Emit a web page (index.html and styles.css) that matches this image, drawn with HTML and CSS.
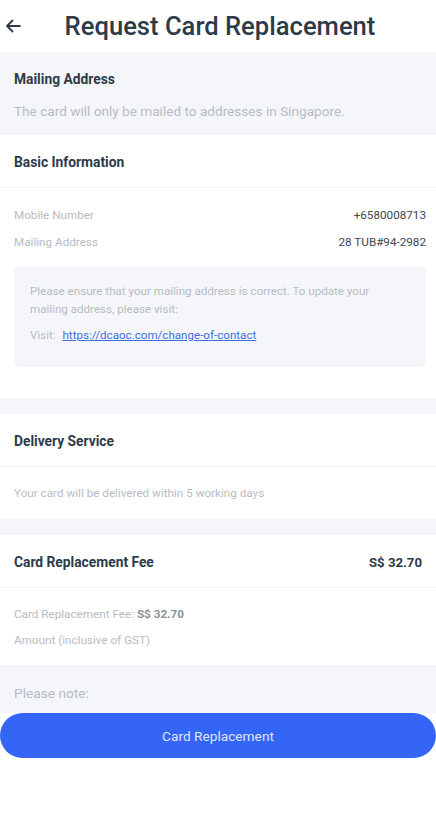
FILE: index.html
```html
<!DOCTYPE html>
<html lang="en">
<head>
  <meta charset="UTF-8">
  <title>Request Card Replacement</title>
  <link rel="stylesheet" href="styles.css">
</head>
<body>
  <header class="topbar">
    <span class="back">
      <svg width="16" height="14" viewBox="0 0 16 14"><path d="M15 7H2M7.5 1.5L2 7l5.5 5.5" fill="none" stroke="#2d3a4a" stroke-width="1.8" stroke-linecap="round" stroke-linejoin="round"/></svg>
    </span>
    <h1>Request Card Replacement</h1>
  </header>

  <main>
    <section class="intro">
      <h2>Mailing Address</h2>
      <p>The card will only be mailed to addresses in Singapore.</p>
    </section>

    <section class="card basic">
      <div class="card-head"><h2>Basic Information</h2></div>
      <div class="row"><span>Mobile Number</span><span class="val">+6580008713</span></div>
      <div class="row"><span>Mailing Address</span><span class="val">28 TUB#94-2982</span></div>
      <div class="note">
        <p>Please ensure that your mailing address is correct. To update your mailing address, please visit:</p>
        <p class="visit">Visit: <a href="#">https://dcaoc.com/change-of-contact</a></p>
      </div>
    </section>

    <section class="card">
      <div class="card-head"><h2>Delivery Service</h2></div>
      <div class="card-body"><p>Your card will be delivered within 5 working days</p></div>
    </section>

    <section class="card last">
      <div class="card-head"><h2>Card Replacement Fee</h2><span class="price">S$ 32.70</span></div>
      <div class="fee-body">
        <p>Card Replacement Fee: <b>S$ 32.70</b></p>
        <p>Amount (inclusive of GST)</p>
      </div>
    </section>

    <section class="please">Please note:</section>
  </main>

  <button class="submit">Card Replacement</button>
</body>
</html>
```
FILE: styles.css
```css
body {
  margin: 0;
  font-family: Roboto, "Noto Sans", Arial, sans-serif;
  background: #fff;
  color: #2d3a4a;
  width: 436px;
}
.topbar {
  height: 52px;
  display: flex;
  align-items: center;
  position: relative;
}
.back {
  position: absolute;
  left: 5px;
  top: 18px;
}
.topbar h1 {
  margin: 0 auto;
  font-size: 25.6px;
  font-weight: 500;
  color: #2d3a4a;
  padding-left: 4px;
}
main {
  background: #f5f6f9;
}
h2 {
  margin: 0;
  font-size: 13.8px;
  font-weight: 700;
  color: #2d3a4a;
}
p {
  margin: 0;
}
.intro {
  height: 83px;
  padding: 19px 14px 0;
  box-sizing: border-box;
}
.intro p {
  margin-top: 16px;
  font-size: 13.6px;
  color: #b7bcc4;
}
.card {
  background: #fff;
  margin-bottom: 16px;
}
.card.last {
  margin-bottom: 0;
}
.card-head {
  height: 53px;
  display: flex;
  align-items: center;
  justify-content: space-between;
  padding: 2px 14px 0;
  box-sizing: border-box;
  border-bottom: 1px solid #f0f1f4;
}
.price {
  font-size: 13.2px;
  font-weight: 700;
}
.basic {
  padding-bottom: 31px;
}
.row {
  height: 27px;
  display: flex;
  align-items: center;
  justify-content: space-between;
  padding: 0 10px 0 14px;
  font-size: 11.7px;
  color: #b7bcc4;
}
.basic .card-head + .row {
  margin-top: 13px;
}
.row .val {
  color: #3d4654;
}
.note {
  margin: 12px 10px 0 14px;
  background: #f5f6f9;
  border-radius: 4px;
  padding: 15px 34px 23px 16px;
  font-size: 11.6px;
  line-height: 18px;
  color: #b7bcc4;
}
.note .visit {
  margin-top: 8px;
}
.note a {
  color: #3d6fe0;
  margin-left: 4px;
}
.card-body {
  height: 52px;
  display: flex;
  align-items: center;
  padding: 0 14px;
  font-size: 11.7px;
  color: #b7bcc4;
}
.fee-body {
  padding: 13px 14px 12px;
  font-size: 11.7px;
  line-height: 26px;
  color: #b7bcc4;
}
.fee-body b {
  color: #8a919c;
}
.please {
  height: 48px;
  padding: 20px 14px 0;
  box-sizing: border-box;
  font-size: 13.7px;
  line-height: 16px;
  color: #b7bcc4;
}
.submit {
  display: block;
  width: 436px;
  height: 45px;
  border: none;
  border-radius: 23px;
  background: #3465f6;
  color: #dfe6fb;
  font-family: Roboto, Arial, sans-serif;
  font-size: 13.7px;
  cursor: pointer;
}
```
